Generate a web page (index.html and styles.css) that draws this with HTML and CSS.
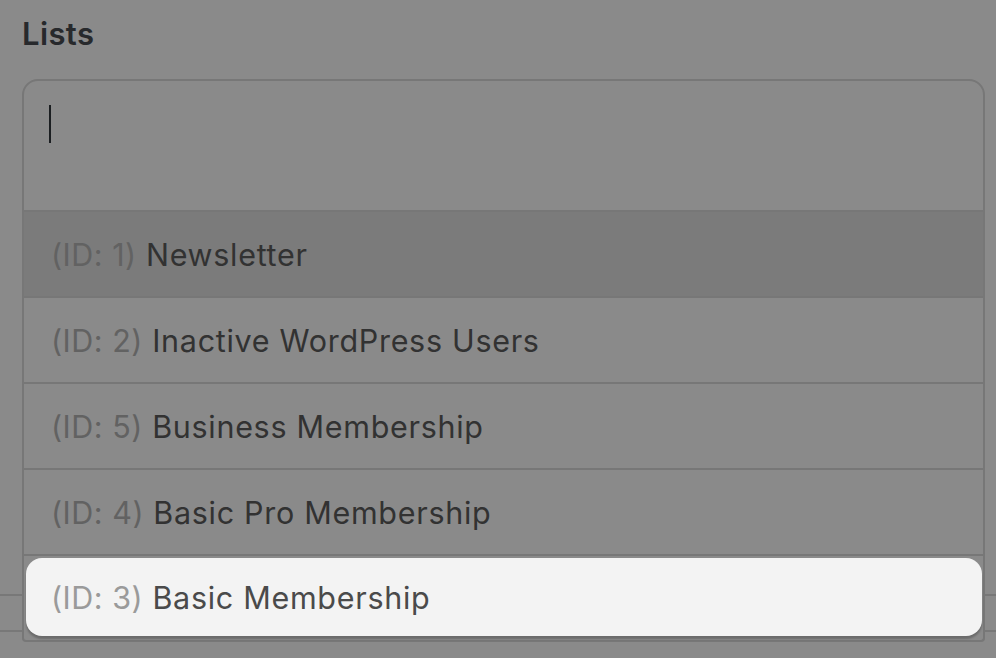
FILE: index.html
```html
<!DOCTYPE html>
<html>
<head>
  <meta charset="UTF-8"/>
  <title>Lists</title>
  <link rel="stylesheet" href="styles.css">
</head>
<body>
<div class="page">
  <h2 class="field-title">Lists</h2>

  <div class="select">
    <div class="select-input"><span class="caret"></span></div>

    <ul class="options">
      <li class="option is-hover"><span class="opt-id">(ID: 1)</span> Newsletter</li>
      <li class="option"><span class="opt-id">(ID: 2)</span> Inactive WordPress Users</li>
      <li class="option"><span class="opt-id">(ID: 5)</span> Business Membership</li>
      <li class="option"><span class="opt-id">(ID: 4)</span> Basic Pro Membership</li>
      <li class="option is-focus">
        <div class="option-card"><span class="opt-id">(ID: 3)</span> Basic Membership</div>
      </li>
    </ul>
  </div>

  <div class="next-field"></div>
</div>
</body>
</html>
```

FILE: styles.css
```css
  html, body { margin : 0; padding : 0; }

  body { background : #8a8a8a; font-family : Inter, "Noto Sans", sans-serif; color : #333; }

  * { box-sizing : border-box; }

  ul, li { list-style : none; margin : 0; padding : 0; }

  /* ========== field ========== */
  .page { padding : 18px 11px 0 22px; min-height : 100vh; }

  .field-title { margin : 0 0 29px; font-size : 31px; line-height : 32px; font-weight : 600; color : #27292c; letter-spacing : 0.4px; }

  .select { position : relative; z-index : 2; }

  .select-input { height : 133px; border : 2px solid #777; border-radius : 16px 16px 0 0; padding : 24px 0 0 25px; }

  .caret { display : block; width : 2px; height : 38px; background : #1b1e21; }

  .options { position : absolute; top : 100%; left : 0; right : 0; border : 2px solid #777; border-top : none; border-radius : 0 0 4px 4px; background : #8a8a8a; }

  .option { height : 86px; border-bottom : 2px solid #777; padding-left : 27px; display : flex; align-items : center; font-size : 30.5px; letter-spacing : 0.7px; color : #323232; white-space : pre; }
  .option:last-child { border-bottom : none; height : 84px; }

  .opt-id { color : #626262; letter-spacing : 0.5px; }

  .option.is-hover { background : #7b7b7b; }

  .option.is-focus { padding : 2px 1px 4px 2px; align-items : stretch; }

  .option-card { flex : 1; display : flex; align-items : center; padding-left : 25px; background : #f3f3f3; border-radius : 16px; box-shadow : 0 3px 2px rgba(0, 0, 0, 0.22); color : #4a4a4a; white-space : pre; }
  .option-card .opt-id { color : #9a9a9a; }

  .next-field { margin : 382px -11px 0 -22px; height : 38px; border-top : 2px solid #787878; border-bottom : 2px solid #787878; }
```
